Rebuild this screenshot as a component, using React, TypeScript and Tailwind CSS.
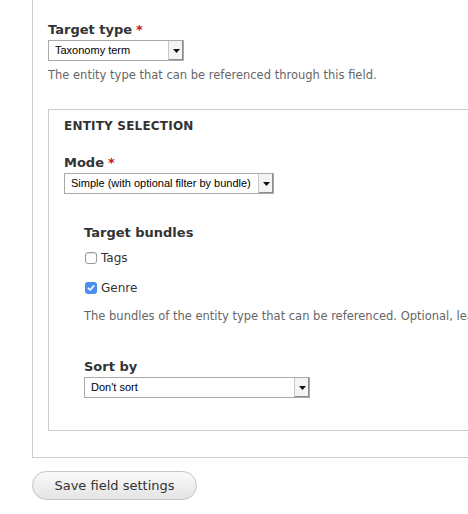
import React from "react";

const labelFont = { fontFamily: '"DejaVu Sans", sans-serif' };

function Select({ value, width }: { value: string; width: string }) {
  return (
    <div className={`relative flex h-[21px] items-center border border-[#a9a9a9] bg-white ${width}`}>
      <span className="pl-[6px] text-[11px] text-black" style={{ fontFamily: '"Liberation Sans", Arial, sans-serif' }}>
        {value}
      </span>
      <div className="absolute right-0 top-0 flex h-[19px] w-[15px] items-center justify-center border-l border-[#c8c8c8] bg-[#f4f4f4] shadow-[inset_-1px_-1px_0_#8c8c8c]">
        <svg width="7" height="4" viewBox="0 0 7 4">
          <path d="M0 0h7L3.5 4z" fill="#111" />
        </svg>
      </div>
    </div>
  );
}

function Req() {
  return <span className="ml-[4px] text-[#cc1111]">*</span>;
}

export default function App() {
  return (
    <div className="h-[514px] w-[468px] overflow-hidden bg-white text-[#333]" style={labelFont}>
      <div className="ml-[32px] w-[480px] border-b border-l border-[#cccccc] pb-[26px] pl-[15px] pt-[22px]">
        <div className="text-[13px] font-bold leading-[16px] text-[#333]">
          Target type<Req />
        </div>
        <div className="mt-[2px]">
          <Select value="Taxonomy term" width="w-[136px]" />
        </div>
        <div className="mt-[6px] whitespace-nowrap text-[11.5px] leading-[16px] text-[#666]">
          The entity type that can be referenced through this field.
        </div>

        <div className="mt-[26px] w-[460px] border-b border-l border-t border-[#cccccc] pb-[32px] pl-[15px] pt-[8px]">
          <div className="text-[12px] font-bold leading-[16px] tracking-[0.2px] text-[#333]">ENTITY SELECTION</div>
          <div className="mt-[21px] text-[13px] font-bold leading-[16px]">
            Mode<Req />
          </div>
          <div className="mt-[2px]">
            <Select value="Simple (with optional filter by bundle)" width="w-[210px]" />
          </div>

          <div className="ml-[20px] mt-[31px]">
            <div className="text-[13px] font-bold leading-[16px]">Target bundles</div>
            <div className="mt-[9px] flex items-center gap-[4px]">
              <div className="ml-[1px] h-[12px] w-[12px] rounded-[3px] border border-[#9a9a9a] bg-white shadow-[inset_0_1px_1px_rgba(0,0,0,0.1)]" />
              <span className="text-[12px] leading-[16px] text-[#333]">Tags</span>
            </div>
            <div className="mt-[14px] flex items-center gap-[4px]">
              <div className="ml-[1px] flex h-[12px] w-[12px] items-center justify-center rounded-[3px] bg-[#4a8ff0]">
                <svg width="8" height="8" viewBox="0 0 8 8">
                  <path d="M1.3 4.2 3.2 6 6.8 1.8" stroke="white" strokeWidth="1.6" fill="none" strokeLinecap="round" strokeLinejoin="round" />
                </svg>
              </div>
              <span className="text-[12px] leading-[16px] text-[#333]">Genre</span>
            </div>
            <div className="mt-[12px] whitespace-nowrap text-[11.5px] leading-[16px] text-[#666]">
              The bundles of the entity type that can be referenced. Optional, leave empty for all bundles.
            </div>

            <div className="mt-[35px] text-[13px] font-bold leading-[16px]">Sort by</div>
            <div className="mt-[2px]">
              <Select value="Don't sort" width="w-[226px]" />
            </div>
          </div>
        </div>
      </div>

      <button
        className="ml-[32px] mt-[13px] h-[29px] w-[165px] rounded-full border border-[#c4c4c4] bg-gradient-to-b from-[#fafafa] to-[#e4e4e4] text-[13px] text-[#333]"
        style={labelFont}
      >
        Save field settings
      </button>
    </div>
  );
}
